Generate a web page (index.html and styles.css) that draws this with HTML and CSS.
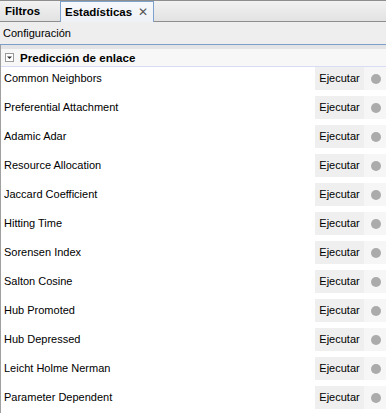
FILE: index.html
```html
<!DOCTYPE html>
<html>
<head>
<meta charset="utf-8">
<link rel="stylesheet" href="styles.css">
</head>
<body>
<div class="tabs">
  <div class="tab">Filtros</div>
  <div class="tab active">Estadísticas <span class="close">✕</span></div>
</div>
<div class="toolbar">Configuración</div>
<div class="panel">
  <div class="strip"></div>
  <div class="header">
    <svg class="toggle" width="9" height="9" viewBox="0 0 9 9"><rect x="0.5" y="0.5" width="8" height="8" fill="#fff" stroke="#9a9a9a"/><path d="M2 3.5 L7 3.5 L4.5 6 Z" fill="#333"/></svg>
    <span>Predicción de enlace</span>
  </div>
  <div class="rows">
    <div class="row"><span class="name">Common Neighbors</span><span class="btn">Ejecutar</span><span class="stat"><i></i></span></div>
    <div class="row"><span class="name">Preferential Attachment</span><span class="btn">Ejecutar</span><span class="stat"><i></i></span></div>
    <div class="row"><span class="name">Adamic Adar</span><span class="btn">Ejecutar</span><span class="stat"><i></i></span></div>
    <div class="row"><span class="name">Resource Allocation</span><span class="btn">Ejecutar</span><span class="stat"><i></i></span></div>
    <div class="row"><span class="name">Jaccard Coefficient</span><span class="btn">Ejecutar</span><span class="stat"><i></i></span></div>
    <div class="row"><span class="name">Hitting Time</span><span class="btn">Ejecutar</span><span class="stat"><i></i></span></div>
    <div class="row"><span class="name">Sorensen Index</span><span class="btn">Ejecutar</span><span class="stat"><i></i></span></div>
    <div class="row"><span class="name">Salton Cosine</span><span class="btn">Ejecutar</span><span class="stat"><i></i></span></div>
    <div class="row"><span class="name">Hub Promoted</span><span class="btn">Ejecutar</span><span class="stat"><i></i></span></div>
    <div class="row"><span class="name">Hub Depressed</span><span class="btn">Ejecutar</span><span class="stat"><i></i></span></div>
    <div class="row"><span class="name">Leicht Holme Nerman</span><span class="btn">Ejecutar</span><span class="stat"><i></i></span></div>
    <div class="row"><span class="name">Parameter Dependent</span><span class="btn">Ejecutar</span><span class="stat"><i></i></span></div>
  </div>
</div>
</body>
</html>
```

FILE: styles.css
```css
html, body {
  margin: 0;
  padding: 0;
  background: #ffffff;
  width: 386px;
  height: 413px;
  overflow: hidden;
  font-family: "Liberation Sans", Arial, sans-serif;
  font-size: 11px;
  color: #000;
}
.tabs {
  height: 20px;
  border-top: 1px solid #8e8e8e;
  border-bottom: 1px solid #8e8e8e;
  background: linear-gradient(#f2f2f2, #e2e2e2);
  display: flex;
  align-items: stretch;
}
.tab {
  display: flex;
  align-items: center;
  font-weight: bold;
  font-size: 11.5px;
  padding: 0 5px;
  width: 50px;
}
.tab.active {
  width: auto;
  padding: 0 5px 0 4px;
  background: linear-gradient(#f6f8fb, #eef1f5);
  border: 1px solid #7da2ce;
  border-bottom: none;
  margin-bottom: -1px;
  gap: 6px;
}
.close {
  font-weight: normal;
  font-size: 12px;
  color: #555;
}
.toolbar {
  height: 22px;
  background: #eeeeee;
  border-bottom: 1px solid #7b9fc7;
  display: flex;
  align-items: center;
  padding-left: 3px;
}
.panel {
  border-left: 1px solid #a0a0a0;
}
.strip {
  height: 4px;
  background: #e4e4e6;
}
.header {
  height: 17px;
  background: #f7f7f7;
  border-bottom: 1px solid #d8dcf5;
  display: flex;
  align-items: center;
  gap: 6px;
  padding-left: 4px;
  font-weight: bold;
  font-size: 11.6px;
}
.toggle { display: block; }
.row {
  height: 29px;
  display: flex;
  align-items: flex-start;
  line-height: 23px;
}
.name {
  flex: 1;
  padding-left: 3px;
}
.btn {
  width: 49px;
  height: 23px;
  background: #efefef;
  text-align: center;
}
.stat {
  width: 22px;
  height: 23px;
  background: #f6f6f6;
  display: flex;
  align-items: center;
  justify-content: center;
}
.stat i {
  width: 10px;
  height: 10px;
  border-radius: 50%;
  background: #ababab;
  display: block;
  margin-left: 2px;
}
```
